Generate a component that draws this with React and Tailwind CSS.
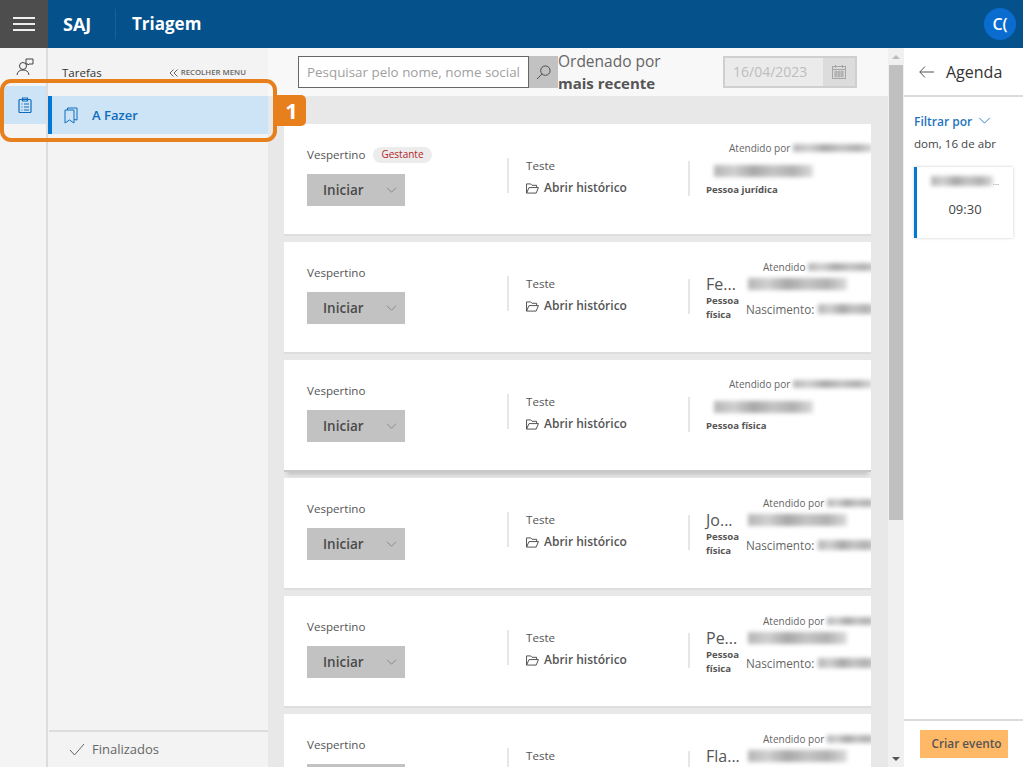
import React from "react";

const Blur = ({ className = "", style }) => (
  <div style={style} className={"blur-[2px] bg-[linear-gradient(90deg,#b5b5b5,#d0d0d0,#a8a8a8,#c4c4c4,#b0b0b0,#dcdcdc)] " + className} />
);

const Chev = ({ className = "" }) => (
  <svg viewBox="0 0 14 8" className={className} fill="none" stroke="currentColor" strokeWidth="1">
    <path d="M1 1l6 6 6-6" />
  </svg>
);

const Folder = () => (
  <svg viewBox="0 0 14 12" className="w-[13px] h-[11px] text-[#444]" fill="none" stroke="currentColor" strokeWidth="1">
    <path d="M.5 11V1h4.500l1.500 1.500h5V5M.5 11h10.500l2.500-6H3.200L.5 11z" />
  </svg>
);

function Card({ badge, type, name, atX, atW, atText = "Atendido por", label = "Pessoa física", shade }) {
  return (
    <div className={"flex shrink-0 h-[112px] bg-white pl-[23px] overflow-hidden border-b-2 " + (shade ? "border-[#c8c8c8] shadow-[0_6px_4px_-3px_rgba(0,0,0,.15)]" : "border-[#dedede]")}>
      <div className="w-[200px] shrink-0 pt-[23px]">
        <div className="flex items-center h-[16px] text-[11.6px] text-[#555]">
          <span className={badge ? "" : "-mt-[1px]"}>Vespertino</span>
          {badge && (
            <span className="ml-[8px] px-[8px] h-[16px] leading-[15px] rounded-full bg-[#ececec] text-[#b3262b] text-[10px]">Gestante</span>
          )}
        </div>
        <div className="mt-[11px] w-[98px] h-8 bg-[#c2c2c2] flex items-center justify-between pl-4 pr-[8px] text-[#4a4a4a]">
          <span className="font-semibold text-[13.5px]">Iniciar</span>
          <Chev className="w-[11px] h-[6px] text-[#777]" />
        </div>
      </div>
      <div className="w-[181px] shrink-0">
        <div className="mt-[37px] h-[35px] border-l-2 border-[#e6e6e6] pl-[17px]">
          <div className="text-[11.6px] leading-[16px] -mt-[3px] text-[#555]">Teste</div>
          <div className="flex items-center gap-[5px] mt-[6px] text-xs leading-[16px] font-semibold text-[#555]">
            <Folder />
            <span>Abrir histórico</span>
          </div>
        </div>
      </div>
      <div className="flex-1 min-w-0 relative">
        <div className="mt-[37px] h-[35px] border-l-2 border-[#e6e6e6]" />
        <div className="absolute inset-0 overflow-hidden">
          <div className={"absolute flex items-center text-[10px] leading-[14px] whitespace-nowrap text-[#666] " + (type === "a" ? "top-[17px]" : "top-[18px]")} style={{ left: atX }}>
            <span>{atText}</span>
            <Blur className="ml-[3px] h-[8px]" style={{ width: atW }} />
          </div>
          {type === "a" ? (
            <>
              <Blur className="absolute left-[26px] top-[41px] w-[99px] h-[12px]" />
              <div className="absolute left-[18px] top-[59px] text-[9.6px] leading-[14px] font-bold text-[#555] whitespace-nowrap">{label}</div>
            </>
          ) : (
            <>
              <div className="absolute left-[18px] top-[32px] text-base leading-[20px] font-medium text-[#555]">{name}</div>
              <Blur className="absolute left-[60px] top-[36px] h-[12px] w-[99px]" />
              <div className="absolute left-[18px] top-[52px] w-[36px] text-[9.6px] leading-[14px] font-bold text-[#555]">Pessoa física</div>
              <div className="absolute left-[58px] top-[59px] text-[11.7px] leading-[16px] text-[#666] whitespace-nowrap">Nascimento:</div>
              <Blur className="absolute left-[130px] top-[62px] w-[60px] h-[10px]" />
            </>
          )}
        </div>
      </div>
    </div>
  );
}

export default function App() {
  return (
    <div className="relative h-[767px] w-[1023px] overflow-hidden flex flex-col bg-white font-['Open_Sans','Noto_Sans',sans-serif]">
      <header className="h-12 shrink-0 bg-[#04518c] flex items-center text-white">
        <div className="w-12 h-12 bg-[#4d4d4d] flex flex-col items-center justify-center gap-[4px]">
          <span className="block w-[22px] h-[2px] bg-[#eee]" />
          <span className="block w-[22px] h-[2px] bg-[#eee]" />
          <span className="block w-[22px] h-[2px] bg-[#eee]" />
        </div>
        <span className="ml-[15px] w-[52px] text-lg font-bold">SAJ</span>
        <span className="w-px h-[30px] bg-[#1a6098]" />
        <span className="ml-4 text-[17px] font-bold">Triagem</span>
        <span className="ml-auto mr-[7px] w-8 h-8 rounded-full bg-[#0a6ccf] flex items-center justify-center text-base font-semibold">C(</span>
      </header>

      <div className="flex-1 flex min-h-0">
        <nav className="w-12 shrink-0 bg-[#f4f4f4] border-r-2 border-[#dcdcdc] pl-[3px]">
          <div className="h-[38px] flex items-center justify-center">
            <svg viewBox="0 0 18 18" className="w-[18px] h-[18px] text-[#444]" fill="none" stroke="currentColor" strokeWidth="1">
              <circle cx="7" cy="8" r="3.500" />
              <path d="M1 17c.5-3.500 2.500-5 6-5s5.500 1.500 6 5" />
              <path d="M10 1h7v5h-4l-1 1V6h-2z" />
            </svg>
          </div>
          <div className="h-[38px] bg-[#cce4f6] flex items-center justify-center">
            <svg viewBox="0 0 14 16" className="w-[14px] h-4 text-[#0f6cbd]" fill="none" stroke="currentColor" strokeWidth="1.200">
              <rect x="1" y="2.500" width="12" height="13" rx="1" />
              <path d="M4.500 1h5v3h-5zM3.500 7h1M6 7h5M3.500 10h1M6 10h5M3.500 13h1M6 13h5" />
            </svg>
          </div>
        </nav>

        <aside className="w-[220px] shrink-0 bg-[#f3f3f3] flex flex-col">
          <div className="h-12 flex items-center justify-between pl-[14px] pr-[22px] pt-[2px]">
            <span className="text-[11.5px] text-[#333]">Tarefas</span>
            <span className="flex items-center gap-[3px] text-[7.8px] font-semibold text-[#666]">
              <svg viewBox="0 0 9 8" className="w-[9px] h-2" fill="none" stroke="currentColor" strokeWidth="1"><path d="M4.500.5L1 4l3.500 3.500M8.500.5L5 4l3.500 3.500" /></svg>
              RECOLHER MENU
            </span>
          </div>
          <div className="h-[38px] bg-[#cce4f6] border-l-4 border-[#0078d4] flex items-center pl-3 text-[#0f6cbd]">
            <svg viewBox="0 0 14 17" className="w-[14px] h-[17px]" fill="none" stroke="currentColor" strokeWidth="1">
              <path d="M1 3h9v13l-4.500-3L1 16zM3.500 3V1H13v12l-3-.5" />
            </svg>
            <span className="ml-[14px] text-[13px] font-semibold mt-[2px]">A Fazer</span>
          </div>
          <div className="mt-auto h-[37px] border-t-2 border-[#dcdcdc] flex items-center pl-[20px] text-[#666] ml-px">
            <svg viewBox="0 0 16 13" className="w-4 h-[13px]" fill="none" stroke="currentColor" strokeWidth="1"><path d="M1 7l4.500 5L15 1" /></svg>
            <span className="ml-[7px] text-[13px]">Finalizados</span>
          </div>
        </aside>

        <main className="w-[620px] shrink-0 flex flex-col min-h-0">
          <div className="h-12 shrink-0 bg-[#f8f8f8] flex items-center pl-[30px]">
            <div className="w-[231px] h-8 border border-[#666] bg-white flex items-center pl-2 text-[13.4px] text-[#a0a0a0] whitespace-nowrap overflow-hidden">Pesquisar pelo nome, nome social</div>
            <div className="w-[29px] h-8 bg-[#c2c2c2] flex items-center justify-center">
              <svg viewBox="0 0 16 16" className="w-[15px] h-[15px] text-[#444]" fill="none" stroke="currentColor" strokeWidth="1"><circle cx="10" cy="6" r="5" /><path d="M6.500 9.500L1 15" /></svg>
            </div>
            <div className="w-[165px] text-[#666] text-[15.5px] leading-[22px] whitespace-nowrap">
              Ordenado por<br /><b className="text-[#555] font-bold text-[15px]">mais recente</b>
            </div>
            <div className="w-[134px] h-8 border-2 border-[#cfcfcf] bg-[#ebebeb] flex items-center justify-between pl-2 text-[#bdbdbd] text-sm">
              <span>16/04/2023</span>
              <span className="w-8 h-7 bg-[#dcdcdc] flex items-center justify-center">
                <svg viewBox="0 0 14 14" className="w-[14px] h-[14px] text-[#a5a5a5]" fill="none" stroke="currentColor" strokeWidth="1"><rect x=".5" y="1.500" width="13" height="12" /><path d="M.5 4.500h13M3.500 0v3M10.500 0v3M2 7h10M2 9h10M2 11h10M4 5.500v7M7 5.500v7M10 5.500v7" /></svg>
              </span>
            </div>
          </div>
          <div className="flex-1 min-h-0 bg-[#e8e8e8] overflow-hidden pl-4 pr-[17px] pt-7 flex flex-col gap-[6px]">
            <Card type="a" badge atX="41px" atW="80px" label="Pessoa jurídica" />
            <Card type="b" name="Fe..." atX="75px" atText="Atendido" atW="70px" />
            <Card type="a" atX="41px" atW="80px" shade />
            <Card type="b" name="Jo..." atX="75px" atW="50px" />
            <Card type="b" name="Pe..." atX="75px" atW="50px" />
            <Card type="b" name="Fla..." atX="75px" atW="50px" />
          </div>
        </main>

        <div className="w-4 shrink-0 bg-[#f0f0f0] flex flex-col items-center">
          <div className="h-[17px] flex items-center"><span className="w-0 h-0 border-x-[4px] border-x-transparent border-b-[4px] border-b-[#bbb]" /></div>
          <div className="w-[14px] h-[455px] bg-[#c0c0c0]" />
          <div className="mt-auto h-[17px] flex items-center"><span className="w-0 h-0 border-x-[4px] border-x-transparent border-t-[4px] border-t-[#555]" /></div>
        </div>

        <section className="flex-1 flex flex-col bg-white">
          <div className="h-[49px] shrink-0 border-b-2 border-[#dcdcdc] flex items-center pl-[15px]">
            <svg viewBox="0 0 15 12" className="w-[15px] h-3 text-[#555]" fill="none" stroke="currentColor" strokeWidth="1"><path d="M6 .5L.8 6 6 11.500M.8 6H15" /></svg>
            <span className="ml-3 text-base text-[#333]">Agenda</span>
          </div>
          <div className="pl-[10px] pt-[17px] flex-1">
            <div className="flex items-center gap-[6px] text-xs leading-4 font-semibold text-[#1f74c0]">
              Filtrar por
              <Chev className="w-[13px] h-[7px] -mt-1" />
            </div>
            <div className="mt-[6px] text-[11.6px] leading-4 text-[#444]">dom, 16 de abr</div>
            <div className="mt-[15px] w-[99px] h-[71px] border-l-[3px] border-[#0078d4] bg-white shadow-[0_0_3px_rgba(0,0,0,.2)] flex flex-col items-center pt-[9px]">
              <div className="flex items-end"><Blur className="w-[62px] h-[10px]" /><span className="text-[8px] leading-[8px] text-[#777]">...</span></div>
              <div className="mt-[14px] text-[13px] text-[#444]">09:30</div>
            </div>
          </div>
          <div className="h-[48px] shrink-0 border-t-2 border-[#dcdcdc] pl-4 pt-[9px]">
            <div className="w-[88px] h-[28px] bg-[#ffb966] flex items-center justify-center pl-[5px] text-[11.8px] font-semibold text-[#555] whitespace-nowrap">Criar evento</div>
          </div>
        </section>
      </div>

      <div className="absolute left-0 top-[79px] w-[277px] h-[63px] rounded-[11px] border-4 border-[#e67f1c]" />
      <div className="absolute left-[277px] top-[95px] w-[29px] h-[31px] rounded-r-[5px] bg-[#e67f1c] flex items-center justify-center text-white text-[22px] font-bold">1</div>
    </div>
  );
}
